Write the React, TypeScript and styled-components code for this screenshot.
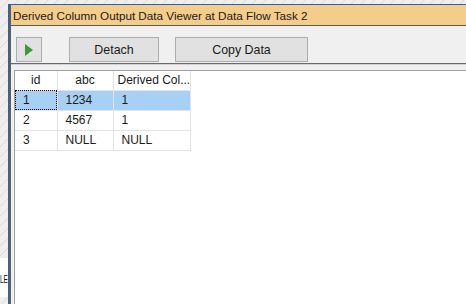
import React from 'react';
import styled, { createGlobalStyle } from 'styled-components';

const GlobalStyle = createGlobalStyle`
  html, body {
    margin: 0;
    padding: 0;
    width: 466px;
    height: 304px;
    overflow: hidden;
  }
  body {
    font-family: "Liberation Sans", Arial, sans-serif;
    font-size: 12px;
    color: #000;
    background-color: #efefef;
    background-image: repeating-linear-gradient(
      135deg,
      #efefef 0px,
      #efefef 5px,
      #dfdfdf 6px,
      #efefef 7px
    );
  }
`;

const rows = [
  { id: '1', abc: '1234', derived: '1' },
  { id: '2', abc: '4567', derived: '1' },
  { id: '3', abc: 'NULL', derived: 'NULL' },
];

const PlayIcon = () => (
  <svg width="8" height="12" viewBox="0 0 8 12">
    <path d="M0 0 L8 6 L0 12 Z" fill="#3c9a3c" />
  </svg>
);

export default function App() {
  return (
    <>
      <GlobalStyle />
      <Desktop>
        <Gutter>
          <BehindBox>
            <BehindLabel>LE</BehindLabel>
          </BehindBox>
        </Gutter>
        <Window>
          <TitleBar>Derived Column Output Data Viewer at Data Flow Task 2</TitleBar>
          <Toolbar>
            <ToolButton $width={26} $gapAfter={27}>
              <PlayIcon />
            </ToolButton>
            <ToolButton $width={90} $gapAfter={16}>Detach</ToolButton>
            <ToolButton $width={133}>Copy Data</ToolButton>
          </Toolbar>
          <Body>
            <GridPanel>
              <Grid>
                <thead>
                  <tr>
                    <HeaderCell $width={42}>id</HeaderCell>
                    <HeaderCell $width={56}>abc</HeaderCell>
                    <HeaderCell $width={74} $left>Derived Col...</HeaderCell>
                  </tr>
                </thead>
                <tbody>
                  {rows.map((row, i) => (
                    <Row key={row.id} $selected={i === 0}>
                      <Cell $focused={i === 0}>{row.id}</Cell>
                      <Cell>{row.abc}</Cell>
                      <Cell>{row.derived}</Cell>
                    </Row>
                  ))}
                </tbody>
              </Grid>
            </GridPanel>
          </Body>
        </Window>
      </Desktop>
    </>
  );
}

const Desktop = styled.div`
  display: flex;
  width: 466px;
  height: 304px;
`;

const Gutter = styled.div`
  width: 8px;
  flex-shrink: 0;
  display: flex;
  flex-direction: column;
  justify-content: flex-end;
  padding-bottom: 7px;
  box-sizing: border-box;
`;

const BehindBox = styled.div`
  height: 39px;
  background: #fff;
  display: flex;
  align-items: center;
  justify-content: flex-end;
  padding-top: 2px;
  box-sizing: border-box;
`;

const BehindLabel = styled.span`
  display: inline-block;
  white-space: nowrap;
  font-size: 10.5px;
  color: #111;
  transform: scaleX(0.62);
  transform-origin: right center;
`;

const Window = styled.div`
  flex: 1;
  margin-top: 4px;
  display: flex;
  flex-direction: column;
  border-top: 1px solid #2f5fb0;
  border-left: 1px solid #2f5fb0;
  box-shadow: inset 2px 0 0 #5e5e5e;
  padding-left: 2px;
  background: #f0f0f0;
  min-width: 0;
`;

const TitleBar = styled.div`
  height: 20px;
  background: #f5cd8a;
  border-bottom: 1px solid #5a5a5a;
  padding-left: 2px;
  line-height: 21px;
  white-space: nowrap;
  font-size: 11.7px;
  color: #1a1a1a;
`;

const Toolbar = styled.div`
  height: 38px;
  display: flex;
  align-items: flex-start;
  padding: 11px 0 0 5px;
  box-sizing: border-box;
  background: #f0f0f0;
  border-bottom: 1px solid #6a6a6a;
`;

const ToolButton = styled.div<{ $width: number; $gapAfter?: number }>`
  width: ${(p) => p.$width}px;
  height: 25px;
  margin-right: ${(p) => p.$gapAfter ?? 0}px;
  box-sizing: border-box;
  border: 1px solid #adadad;
  background: #e1e1e1;
  display: flex;
  align-items: center;
  justify-content: center;
  font-size: 12.4px;
  color: #1a1a1a;
`;

const Body = styled.div`
  flex: 1;
  display: flex;
  padding: 5px 0 0 3px;
  background: #f0f0f0;
  border-top: 1px solid #d0d0d0;
`;

const GridPanel = styled.div`
  flex: 1;
  background: #fff;
  border-top: 1px solid #a0a0a0;
  border-left: 1px solid #a0a0a0;
`;

const Grid = styled.table`
  border-collapse: collapse;
  table-layout: fixed;
  font-size: 12px;
`;

const HeaderCell = styled.th<{ $width: number; $left?: boolean }>`
  width: ${(p) => p.$width}px;
  height: 19px;
  padding: 0 0 0 ${(p) => (p.$left ? '4px' : '0')};
  font-weight: normal;
  text-align: ${(p) => (p.$left ? 'left' : 'center')};
  color: #1a1a1a;
  border-right: 1px solid #e4e4e4;
  border-bottom: 1px solid #e4e4e4;
  box-sizing: border-box;
  white-space: nowrap;
`;

const Row = styled.tr<{ $selected?: boolean }>`
  background: ${(p) => (p.$selected ? '#a8d0f4' : '#fff')};
`;

const Cell = styled.td<{ $focused?: boolean }>`
  height: 20px;
  padding: 0 0 0 8px;
  box-sizing: border-box;
  border-right: 1px solid #e4e4e4;
  border-bottom: 1px solid #e4e4e4;
  outline: ${(p) => (p.$focused ? '1px dotted #000' : 'none')};
  outline-offset: -1px;
  color: #1a1a1a;
`;
